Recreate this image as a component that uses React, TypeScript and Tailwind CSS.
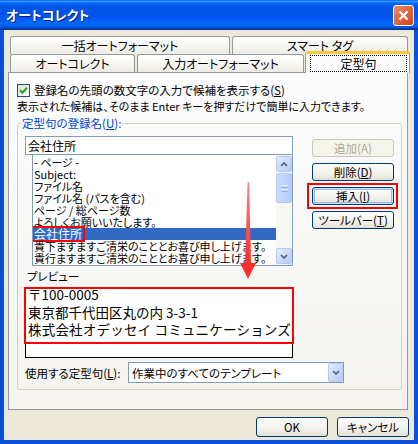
import React from 'react';

const listItems = [
  '- ページ -',
  'Subject:',
  'ファイル名',
  'ファイル名 (パスを含む)',
  'ページ / 総ページ数',
  'よろしくお願いいたします。',
  '会社住所',
  '貴下ますますご清栄のこととお喜び申し上げます。',
  '貴行ますますご清栄のこととお喜び申し上げます。',
];

function Tab({ label, width }: { label: string; width: string }) {
  return (
    <div
      className={`flex h-[18px] shrink-0 items-center justify-center rounded-t-[3px] border border-b-0 border-[#919B9C] bg-[linear-gradient(to_bottom,#FFFFFF_0%,#F5F4EF_60%,#ECEBE6_100%)] ${width}`}
    >
      {label}
    </div>
  );
}

function XpButton({
  children,
  disabled = false,
  focus = false,
  className = '',
}: {
  children: React.ReactNode;
  disabled?: boolean;
  focus?: boolean;
  className?: string;
}) {
  return (
    <div
      className={`flex shrink-0 items-center justify-center rounded-[3px] border ${
        disabled
          ? 'border-[#C9C7BA] bg-[#F5F4EA] text-[#ACA899]'
          : 'border-[#003C74] bg-[linear-gradient(to_bottom,#FFFFFF_0%,#F4F3EE_55%,#E2DFD5_100%)] text-black'
      } ${focus ? 'shadow-[inset_0_0_0_1px_#CEE7FF,inset_0_0_0_2px_#98B8EA]' : ''} ${className}`}
    >
      {children}
    </div>
  );
}

function ScrollBtn({ dir }: { dir: 'up' | 'down' }) {
  return (
    <div className="flex h-[16px] w-[16px] shrink-0 items-center justify-center rounded-[2px] border border-[#B5C8F4] bg-[linear-gradient(to_bottom_right,#E3EBFD,#B9CCF7)]">
      <svg width="8" height="5" viewBox="0 0 8 5">
        <path
          d={dir === 'up' ? 'M1 4 L4 1 L7 4' : 'M1 1 L4 4 L7 1'}
          stroke="#4D6185"
          strokeWidth="1.7"
          fill="none"
        />
      </svg>
    </div>
  );
}

export default function App() {
  return (
    <div className="relative h-[444px] w-[418px] overflow-hidden bg-[#0A4FD8] font-['Noto_Sans_CJK_JP',sans-serif] text-[11.5px] leading-[14px] text-black [font-feature-settings:'palt']">
      {/* Title bar */}
      <div className="flex h-[30px] items-center justify-between pl-[6px] pr-[4px] bg-[linear-gradient(to_bottom,#0058EE_0%,#3593FF_4%,#288EFF_6%,#127DFF_8%,#036FFC_10%,#0262EE_14%,#0057E5_20%,#0054E3_24%,#0055EB_56%,#005BF5_66%,#026AFE_76%,#0062EF_86%,#0052D6_92%,#0040AB_94%,#003092_100%)]">
        <span className="text-[13px] font-bold text-white [text-shadow:1px_1px_0_#0A1883]">オートコレクト</span>
        <div className="flex h-[21px] w-[21px] items-center justify-center rounded-[3px] border border-white bg-[linear-gradient(to_bottom_right,#EB8A6C,#D2441A)]">
          <svg width="11" height="11" viewBox="0 0 11 11">
            <path d="M1.5 1.5 L9.5 9.5 M9.5 1.5 L1.5 9.5" stroke="#FFFFFF" strokeWidth="2.2" />
          </svg>
        </div>
      </div>

      {/* Dialog body */}
      <div className="mx-[4px] h-[410px] bg-[#ECE9D8] pl-[4px] pt-[6px]">
        {/* Tabs */}
        <div className="ml-[2px] flex h-[18px] gap-[2px] text-[12px]">
          <Tab label="一括オートフォーマット" width="w-[220px]" />
          <Tab label="スマート タグ" width="w-[176px]" />
        </div>
        <div className="ml-[2px] flex h-[18px] items-end gap-[2px] text-[12px]">
          <Tab label="オートコレクト" width="w-[125px]" />
          <Tab label="入力オートフォーマット" width="w-[167px]" />
          <div className="relative z-10 -mb-px -ml-px flex h-[22px] w-[105px] shrink-0 rounded-t-[3px] border-x border-t-[3px] border-x-[#919B9C] border-t-[#FFC83C] bg-[#FCFCFE] pb-[1px] pl-[4px] pr-[2px] pt-[1px]">
            <div className="flex h-full w-full items-center justify-center border border-dotted border-black">
              定型句
            </div>
          </div>
        </div>

        {/* Tab panel */}
        <div className="h-[338px] w-[400px] border border-[#919B9C] bg-[linear-gradient(to_bottom,#FCFCFE,#F4F3EE)] pl-[8px] pt-[10px]">
          <div className="flex h-[14px] items-center gap-[4px]">
            <div className="flex h-[13px] w-[13px] items-center justify-center border border-[#1C5180] bg-[linear-gradient(to_bottom_right,#DCDCD7,#FFFFFF)]">
              <svg width="9" height="9" viewBox="0 0 9 9">
                <path d="M1 4.2 L3.5 6.7 L8 1.8" stroke="#21A121" strokeWidth="2" fill="none" />
              </svg>
            </div>
            <span>
              登録名の先頭の数文字の入力で候補を表示する(<span className="underline">S</span>)
            </span>
          </div>
          <div className="mt-[2px] h-[14px] text-[11px]">表示された候補は、そのまま Enter キーを押すだけで簡単に入力できます。</div>

          <fieldset className="mt-[4px] w-[383px] rounded-[3px] border border-[#D0D0BF] px-[7px] pb-[6px] pt-[7px]">
            <legend className="-ml-[4px] px-[1px] leading-[12px] text-[#0046D5]">
              定型句の登録名(<span className="underline">U</span>):
            </legend>

            <div className="flex">
              <div className="w-[268px]">
                <div className="h-[19px] border border-[#7F9DB9] bg-white pl-[2px] text-[12px] leading-[17px]">会社住所</div>
                <div className="-mt-px ml-[7px] flex h-[112px] w-[261px] border border-[#7F9DB9] bg-white">
                  <div className="flex-1 overflow-hidden pt-[1px] text-[11px]">
                    {listItems.map((item) =>
                      item === '会社住所' ? (
                        <div key={item} className="h-[12px] whitespace-nowrap bg-[#316AC5] leading-[12px] text-white">
                          <span className="inline-block h-[12px] px-[1px] text-[12px] outline-2 outline-[#FF0000]">{item}</span>
                        </div>
                      ) : (
                        <div key={item} className="h-[12px] whitespace-nowrap pl-[1px] leading-[12px]">
                          {item}
                        </div>
                      )
                    )}
                  </div>
                  <div className="flex w-[16px] flex-col bg-[#F7F7F3] py-[1px]">
                    <ScrollBtn dir="up" />
                    <div className="mt-[1px] flex h-[30px] flex-col items-center justify-center gap-[1px] rounded-[2px] border border-[#B5C8F4] bg-[linear-gradient(to_right,#CCDAFD,#B9CBF8)]">
                      <div className="h-px w-[7px] bg-[#EEF3FE]" />
                      <div className="h-px w-[7px] bg-[#8CAEF3]" />
                      <div className="h-px w-[7px] bg-[#EEF3FE]" />
                      <div className="h-px w-[7px] bg-[#8CAEF3]" />
                    </div>
                    <div className="flex-1" />
                    <ScrollBtn dir="down" />
                  </div>
                </div>

                <div className="ml-[2px] mt-[4px] h-[12px] leading-[12px]">プレビュー</div>
                <div className="mt-[5px] h-[71px] border border-black bg-white">
                  <div className="-mx-[2px] -mt-px h-[57px] border-2 border-[#FF0000] pl-[2px] text-[13.5px] leading-[17.5px] [font-feature-settings:normal]">
                    <div className="-mt-[3px] whitespace-nowrap">
                      <div>〒100-0005</div>
                      <div>東京都千代田区丸の内 3-3-1</div>
                      <div className="tracking-[0.2px]">株式会社オデッセイ コミュニケーションズ</div>
                    </div>
                  </div>
                </div>
              </div>

              <div className="ml-[19px] flex flex-col gap-[6px] pt-[3px]">
                <XpButton disabled className="h-[18px] w-[82px]">追加(A)</XpButton>
                <XpButton className="h-[18px] w-[82px]">
                  削除(<span className="underline">D</span>)
                </XpButton>
                <div className="-my-[4px] -ml-[5px] -mr-[4px] border-2 border-[#FF0000] py-[2px] pl-[3px] pr-[2px]">
                  <XpButton focus className="h-[18px] w-[82px]">
                    挿入(<span className="underline">I</span>)
                  </XpButton>
                </div>
                <XpButton className="h-[18px] w-[82px]">
                  ツールバー(<span className="underline">T</span>)
                </XpButton>
              </div>
            </div>

            <div className="mt-[4px] flex items-center">
              <div className="w-[103px]">
                使用する定型句(<span className="underline">L</span>):
              </div>
              <div className="flex h-[21px] w-[216px] items-center border border-[#7F9DB9] bg-white pl-[3px]">
                <div className="flex-1">作業中のすべてのテンプレート</div>
                <div className="flex h-[19px] w-[15px] items-center justify-center rounded-[2px] border border-[#B5C8F4] bg-[linear-gradient(to_bottom_right,#E3EBFD,#B9CCF7)]">
                  <svg width="8" height="5" viewBox="0 0 8 5">
                    <path d="M1 1 L4 4 L7 1" stroke="#4D6185" strokeWidth="1.7" fill="none" />
                  </svg>
                </div>
              </div>
            </div>
          </fieldset>
        </div>

        {/* OK / Cancel */}
        <div className="mt-[7px] flex justify-end gap-[9px] pr-[5px]">
          <XpButton className="h-[20px] w-[72px]">OK</XpButton>
          <XpButton className="h-[20px] w-[72px]">キャンセル</XpButton>
        </div>
      </div>

      {/* Red annotation arrow */}
      <svg className="pointer-events-none absolute left-[238px] top-[180px] z-20" width="20" height="101" viewBox="0 0 20 101">
        <defs>
          <linearGradient id="arrowShaft" x1="0" y1="0" x2="0" y2="1">
            <stop offset="0" stopColor="#FF8080" />
            <stop offset="1" stopColor="#FF2E2E" />
          </linearGradient>
        </defs>
        <polygon points="9.6,2 11,2 13,84 7,84" fill="url(#arrowShaft)" />
        <polygon points="2,83 18,83 10,99" fill="#FF2E2E" />
      </svg>
    </div>
  );
}
